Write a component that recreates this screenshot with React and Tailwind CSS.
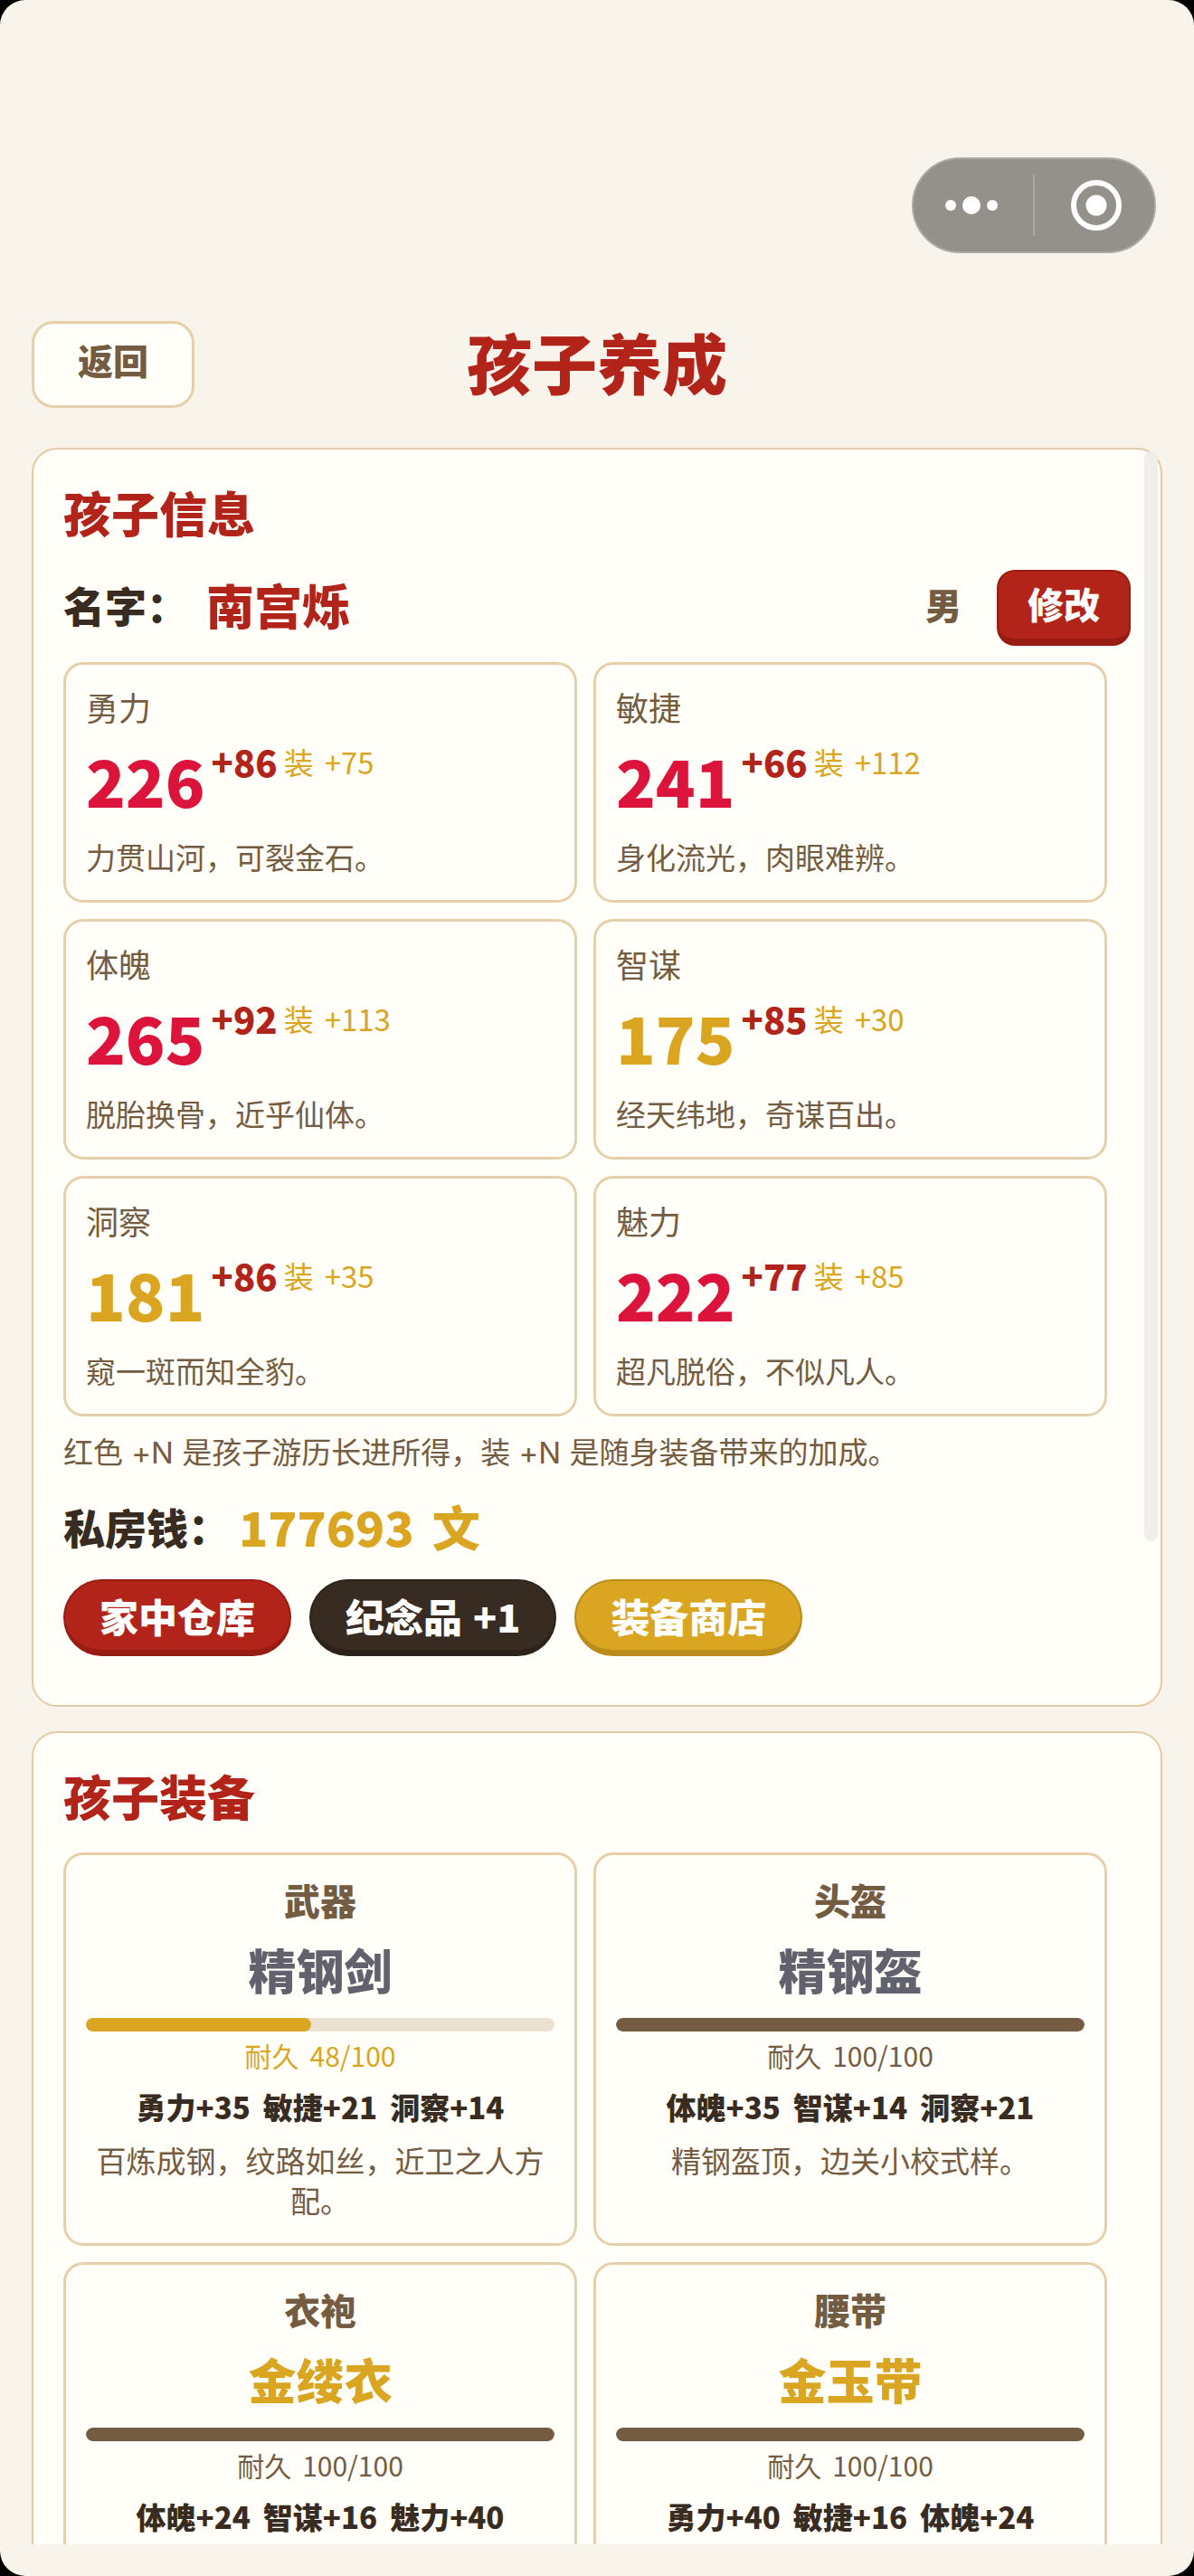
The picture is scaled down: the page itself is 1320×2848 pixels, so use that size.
import clsx from "clsx";

const stats = [
    { name: "勇力", value: 226, growth: 86, gear: 75, desc: "力贯山河，可裂金石。", tone: "crimson" },
    { name: "敏捷", value: 241, growth: 66, gear: 112, desc: "身化流光，肉眼难辨。", tone: "crimson" },
    { name: "体魄", value: 265, growth: 92, gear: 113, desc: "脱胎换骨，近乎仙体。", tone: "crimson" },
    { name: "智谋", value: 175, growth: 85, gear: 30, desc: "经天纬地，奇谋百出。", tone: "gold" },
    { name: "洞察", value: 181, growth: 86, gear: 35, desc: "窥一斑而知全豹。", tone: "gold" },
    { name: "魅力", value: 222, growth: 77, gear: 85, desc: "超凡脱俗，不似凡人。", tone: "crimson" },
];

const equipment = [
    { slot: "武器", name: "精钢剑", tone: "steel", durability: 48, bonus: ["勇力+35", "敏捷+21", "洞察+14"], desc: "百炼成钢，纹路如丝，近卫之人方配。" },
    { slot: "头盔", name: "精钢盔", tone: "steel", durability: 100, bonus: ["体魄+35", "智谋+14", "洞察+21"], desc: "精钢盔顶，边关小校式样。" },
    { slot: "衣袍", name: "金缕衣", tone: "gold", durability: 100, bonus: ["体魄+24", "智谋+16", "魅力+40"] },
    { slot: "腰带", name: "金玉带", tone: "gold", durability: 100, bonus: ["勇力+40", "敏捷+16", "体魄+24"] },
];

const tones = {
    crimson: "text-[#dc143c]",
    gold: "text-[#daa520]",
    steel: "text-[#62626e]",
};

const pills = {
    red: "bg-[#b22419] border-[#981c14]",
    dark: "bg-[#382c22] border-[#2d231b]",
    gold: "bg-[#daa520] border-[#b98c1c]",
};

function Capsule() {
    return (
        <div className="flex h-[106px] w-[270px] items-center rounded-full border-2 border-[#adaaa4] bg-[#94918b]">
            <button type="button" aria-label="更多" className="flex flex-1 justify-center pr-1">
                <svg width="60" height="24" viewBox="0 0 60 24" fill="#fff">
                    <circle cx="7" cy="12" r="6" />
                    <circle cx="30" cy="12" r="10" />
                    <circle cx="53" cy="12" r="6" />
                </svg>
            </button>
            <span className="h-[68px] w-0.5 bg-[#a9a6a0]" />
            <button type="button" aria-label="关闭" className="flex flex-1 justify-center pl-1">
                <svg width="58" height="58" viewBox="0 0 58 58">
                    <circle cx="29" cy="29" r="25" fill="none" stroke="#fff" strokeWidth="6" />
                    <circle cx="29" cy="29" r="11.5" fill="#fff" />
                </svg>
            </button>
        </div>
    );
}

function Panel({ title, children }) {
    return (
        <section className="rounded-[28px] border-2 border-[#e3cba6] bg-[#fffef9] px-[33px] pt-[34px] pb-[54px]">
            <h2 className="text-[53px] leading-[70px] font-black text-[#b22419]">{title}</h2>
            {children}
        </section>
    );
}

function StatCard({ stat }) {
    return (
        <div className="rounded-[22px] border-3 border-[#e6d0ac] px-[22px] pt-[22px] pb-[25px]">
            <p className="text-[36px] leading-[48px]">{stat.name}</p>
            <div className="mt-[15px] flex items-start gap-[7px]">
                <span className={clsx("text-[72px] leading-[84px] font-black", tones[stat.tone])}>{stat.value}</span>
                <span className="text-[40px] leading-[44px] font-black text-[#b22419]">+{stat.growth}</span>
                <span className="flex gap-3 text-[33px] leading-[44px] text-[#daa520]">
                    <span>装</span>
                    <span>+{stat.gear}</span>
                </span>
            </div>
            <p className="mt-5 text-[33px] leading-[46px]">{stat.desc}</p>
        </div>
    );
}

function EquipCard({ item }) {
    const worn = item.durability < 50;
    return (
        <div className="min-h-[435px] rounded-[22px] border-3 border-[#e6d0ac] px-[22px] pt-[23px] pb-[25px] text-center">
            <p className="text-[40px] leading-[52px] font-black">{item.slot}</p>
            <h3 className={clsx("mt-4 text-[53px] leading-[70px] font-black", tones[item.tone])}>{item.name}</h3>
            <div className="mt-[19px] h-[15px] overflow-hidden rounded-full bg-[#ebe1d1]">
                <div
                    className={clsx("h-full rounded-full", worn ? "bg-[#daa520]" : "bg-[#745c42]")}
                    style={{ width: `${item.durability}%` }}
                />
            </div>
            <p className={clsx("mt-[6px] flex justify-center gap-3 text-[30px] leading-[40px]", worn && "text-[#daa520]")}>
                <span>耐久</span>
                <span>{item.durability}/100</span>
            </p>
            <p className="mt-[14px] flex justify-center gap-[14px] text-[33px] leading-[46px] font-black text-[#382c22]">
                {item.bonus.map((b) => <span key={b}>{b}</span>)}
            </p>
            {item.desc && <p className="mt-[14px] text-[33px] leading-[44px]">{item.desc}</p>}
        </div>
    );
}

function Pill({ color, children }) {
    return (
        <button
            type="button"
            className={clsx("flex h-[85px] items-center gap-3 rounded-full border-2 border-b-[7px] px-[38px] text-[43px] font-black text-white", pills[color])}
        >
            {children}
        </button>
    );
}

export default function App() {
    return (
        <div className="bg-black">
            <div className="flex h-screen flex-col overflow-hidden rounded-[28px] bg-[#f8f3eb] px-[35px] pt-[174px] pb-[35px] font-['Noto_Sans_CJK_SC',sans-serif] text-[#745c42]">
                <div className="flex justify-end pr-[7px]">
                    <Capsule />
                </div>

                <header className="mt-[75px] grid grid-cols-[1fr_auto_1fr] items-center">
                    <button type="button" className="h-24 justify-self-start rounded-[24px] border-3 border-[#e6d0ac] bg-[#fffef9] px-12 pb-3 text-[39px] font-black">
                        返回
                    </button>
                    <h1 className="pb-2 text-[72px] leading-[88px] font-black text-[#b22419]">孩子养成</h1>
                </header>

                <main className="relative mt-11 flex-1 overflow-hidden">
                    <div className="flex flex-col gap-[27px]">
                        <Panel title="孩子信息">
                            <div className="mt-[29px] flex items-start leading-[76px] font-black">
                                <span className="text-[46px] text-[#382c22]">名字：</span>
                                <span className="ml-5 text-[53px] text-[#b22419]">南宫烁</span>
                                <span className="mr-[39px] ml-auto text-[40px]">男</span>
                                <button type="button" className="h-[84px] rounded-[20px] border-2 border-b-8 border-[#981c14] bg-[#b22419] px-8 pb-1 text-[40px] leading-[60px] text-white">
                                    修改
                                </button>
                            </div>

                            <div className="mt-[18px] grid grid-cols-2 gap-[18px] pr-[26px]">
                                {stats.map((s) => <StatCard key={s.name} stat={s} />)}
                            </div>

                            <p className="mt-4 font-[Inter,'Noto_Sans_CJK_SC',sans-serif] text-[33px] leading-[48px]">
                                红色 +N 是孩子游历长进所得，装 +N 是随身装备带来的加成。
                            </p>

                            <div className="mt-[22px] flex leading-[70px] font-black">
                                <span className="text-[46px] text-[#382c22]">私房钱：</span>
                                <span className="ml-[10px] flex gap-5 text-[53px] text-[#daa520]">
                                    <span>177693</span>
                                    <span>文</span>
                                </span>
                            </div>

                            <div className="mt-6 flex gap-5">
                                <Pill color="red">家中仓库</Pill>
                                <Pill color="dark"><span>纪念品</span><span>+1</span></Pill>
                                <Pill color="gold">装备商店</Pill>
                            </div>
                        </Panel>

                        <Panel title="孩子装备">
                            <div className="mt-7 grid grid-cols-2 gap-[18px] pr-[26px]">
                                {equipment.map((e) => <EquipCard key={e.slot} item={e} />)}
                            </div>
                        </Panel>
                    </div>

                    {/* scroll thumb */}
                    <div className="absolute top-1 right-[5px] h-[52%] w-[15px] rounded-full bg-[#efeeeb]" />
                </main>
            </div>
        </div>
    );
}
